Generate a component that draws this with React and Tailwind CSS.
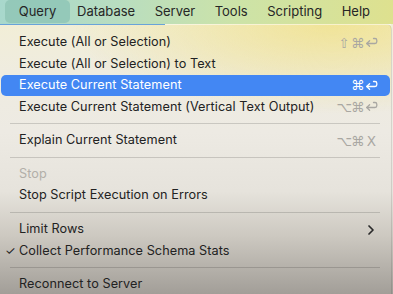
import React from "react";

const ReturnIcon = ({ color }) => (
  <svg width="13" height="11" viewBox="0 0 13 11" fill="none" stroke={color} strokeWidth="1.3" strokeLinecap="round" strokeLinejoin="round">
    <path d="M8.5 1.5 H10 a1.8 1.8 0 0 1 1.8 1.8 v1.4 a1.8 1.8 0 0 1 -1.8 1.8 H1.8" />
    <path d="M4.6 3.7 L1.8 6.5 L4.6 9.3" />
  </svg>
);

const Glyph = ({ children }) => (
  <span className="inline-flex w-[13.5px] justify-center">{children}</span>
);

function Shortcut({ keys, color }) {
  return (
    <span className="flex items-center text-[13.5px] font-['DejaVu_Sans',sans-serif]" style={{ color }}>
      {keys.map((k, i) => (
        <Glyph key={i}>{k === "ret" ? <ReturnIcon color={color} /> : k}</Glyph>
      ))}
    </span>
  );
}

function Row({ label, keys, active, disabled, check, submenu }) {
  const textColor = active ? "text-white" : disabled ? "text-[#b2afa9]" : "text-[#222222]";
  const scColor = active ? "#ffffff" : "#a9a7a2";
  return (
    <div
      className={`mx-[1px] flex h-[21.4px] items-center rounded-[5px] pl-[4px] pr-[12px] ${active ? "bg-[#4387f3]" : ""}`}
    >
      <span className="flex w-[14px] justify-start text-[12px] text-[#222222]">{check ? "✓" : ""}</span>
      <span className={`flex-1 text-[12.7px] leading-none tracking-[0.05px] ${textColor}`}>{label}</span>
      {keys && <Shortcut keys={keys} color={scColor} />}
      {submenu && (
        <svg width="8" height="12" viewBox="0 0 8 12" fill="none" stroke="#2a2a2a" strokeWidth="1.7" strokeLinecap="round" strokeLinejoin="round" className="mr-[3px]">
          <path d="M2 2 L6 6 L2 10" />
        </svg>
      )}
    </div>
  );
}

const Sep = () => (
  <div className="flex h-[12.4px] items-center px-[10px] pr-[11px]">
    <div className="h-px w-full bg-black/15" />
  </div>
);

export default function App() {
  return (
    <div className="h-[294px] w-[393px] overflow-hidden font-['Inter','DejaVu_Sans',sans-serif] bg-[linear-gradient(to_bottom,#f3efd2_0%,#efece0_25%,#edeae3_45%,#e6e3dc_65%,#cdc9c1_80%,#a29e98_100%)]">
      {/* Menu bar */}
      <div className="flex h-[24px] items-center bg-[linear-gradient(to_right,#a8d8cc_0%,#b8ddc0_30%,#cce3a8_60%,#dee18f_100%)] text-[13px] text-[#262626]">
        <div className="ml-[5px] flex h-[23px] w-[65px] items-center justify-center self-start rounded-[5px] bg-[#91c6b7]/90">
          Query
        </div>
        <div className="ml-[7px] flex items-center gap-[19.5px]">
          <span>Database</span>
          <span>Server</span>
          <span>Tools</span>
          <span>Scripting</span>
          <span>Help</span>
        </div>
      </div>
      {/* Menu panel */}
      <div className="relative w-[392px] rounded-tr-[6px] border-r border-black/10 bg-[radial-gradient(ellipse_260px_90px_at_85%_0%,rgba(240,224,130,0.75),rgba(240,224,130,0)_100%)]">
        <div className="flex h-px">
          <div className="w-[165px] bg-[#69a3d9]" />
          <div className="flex-1 bg-white/50" />
        </div>
        <div className="pt-[7px]">
          <Row label="Execute (All or Selection)" keys={["⇧", "⌘", "ret"]} />
          <Row label="Execute (All or Selection) to Text" />
          <Row label="Execute Current Statement" keys={["⌘", "ret"]} active />
          <Row label="Execute Current Statement (Vertical Text Output)" keys={["⌥", "⌘", "ret"]} />
          <Sep />
          <Row label="Explain Current Statement" keys={["⌥", "⌘", "X"]} />
          <Sep />
          <Row label="Stop" disabled />
          <Row label="Stop Script Execution on Errors" />
          <Sep />
          <Row label="Limit Rows" submenu />
          <Row label="Collect Performance Schema Stats" check />
          <Sep />
          <Row label="Reconnect to Server" />
        </div>
      </div>
    </div>
  );
}
